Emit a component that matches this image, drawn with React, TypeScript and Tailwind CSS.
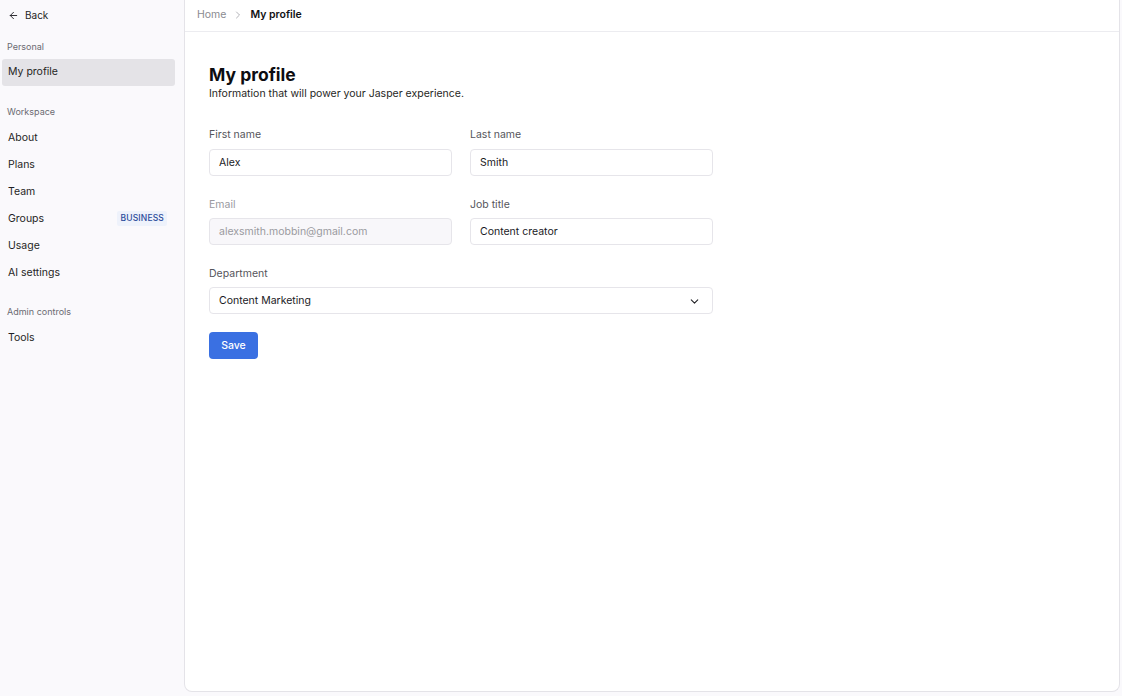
import React from 'react';
import { ArrowLeft, ChevronDown, ChevronRight } from 'lucide-react';

const workspaceItems = ['About', 'Plans', 'Team', 'Groups', 'Usage', 'AI settings'];

function NavItem({ label, active = false, badge }: { label: string; active?: boolean; badge?: string }) {
  return (
    <div
      className={`flex h-[27px] items-center justify-between rounded-[3px] pl-[6px] pr-[8px] text-[10.5px] text-[#1f1f24] ${active ? 'bg-[#e4e3e7]' : ''}`}
    >
      <span>{label}</span>
      {badge && (
        <span className="rounded-[2px] bg-[#eef2fb] px-[3px] py-[1px] text-[8.5px] font-medium tracking-[0.02em] text-[#2a4a9a]">
          {badge}
        </span>
      )}
    </div>
  );
}

function Field({ label, value, disabled = false }: { label: string; value: string; disabled?: boolean }) {
  return (
    <div className="flex flex-col">
      <label className={`mb-[6px] text-[10.5px] ${disabled ? 'text-[#9a9a9f]' : 'text-[#55555b]'}`}>{label}</label>
      <div
        className={`flex h-[27px] items-center rounded-[4px] border border-[#e6e5ea] px-[9px] pt-[1px] text-[10.5px] ${disabled ? 'bg-[#f8f7fa] text-[#9a9a9f]' : 'bg-white text-[#1a1a1e]'}`}
      >
        {value}
      </div>
    </div>
  );
}

export default function App() {
  return (
    <div className="flex h-[696px] w-[1122px] bg-[#faf9fc] font-['Inter',sans-serif]">
      <aside className="flex w-[184px] shrink-0 flex-col px-[2px] pt-[8px]">
        <div className="flex h-[15px] items-center gap-[6px] pl-[6px] text-[10px] text-[#1f1f24]">
          <ArrowLeft className="h-[11px] w-[11px]" strokeWidth={2} />
          <span>Back</span>
        </div>
        <div className="mt-[17px] pl-[5px] text-[9px] text-[#6b6b72]">Personal</div>
        <div className="mt-[5px] w-[173px]">
          <NavItem label="My profile" active />
        </div>
        <div className="mt-[19px] pl-[5px] text-[9px] text-[#6b6b72]">Workspace</div>
        <div className="mt-[6px] flex w-[173px] flex-col">
          {workspaceItems.map((item) => (
            <NavItem key={item} label={item} badge={item === 'Groups' ? 'BUSINESS' : undefined} />
          ))}
        </div>
        <div className="mt-[19px] pl-[5px] text-[9px] text-[#6b6b72]">Admin controls</div>
        <div className="mt-[6px] w-[173px]">
          <NavItem label="Tools" />
        </div>
      </aside>

      <main className="mb-[4px] mr-[2px] flex flex-1 flex-col rounded-b-[8px] border-x border-b border-[#e4e3e8] bg-white">
        <header className="flex h-[32px] shrink-0 items-center gap-[6px] border-b border-[#ececf0] pb-[2px] pl-[12px] text-[10.5px]">
          <span className="text-[#8a8a90]">Home</span>
          <ChevronRight className="h-[12px] w-[12px] text-[#9a9aa0]" strokeWidth={1.5} />
          <span className="font-semibold text-[#111114]">My profile</span>
        </header>

        <div className="flex flex-col pl-[24px] pt-[32px]">
          <h1 className="text-[17.5px] font-bold leading-[22px] text-[#0d0d10]">My profile</h1>
          <p className="text-[10.5px] text-[#1f1f24]">Information that will power your Jasper experience.</p>

          <div className="mt-[25px] grid w-[504px] grid-cols-2 gap-x-[18px] gap-y-[21px]">
            <Field label="First name" value="Alex" />
            <Field label="Last name" value="Smith" />
            <Field label="Email" value="alexsmith.mobbin@gmail.com" disabled />
            <Field label="Job title" value="Content creator" />
            <div className="col-span-2 flex flex-col">
              <label className="mb-[5px] text-[10.5px] text-[#55555b]">Department</label>
              <div className="flex h-[27px] items-center justify-between rounded-[4px] border border-[#e6e5ea] bg-white pl-[9px] pr-[11px] pt-[1px] text-[10.5px] text-[#1a1a1e]">
                <span>Content Marketing</span>
                <ChevronDown className="h-[13px] w-[13px] text-[#222226]" strokeWidth={2} />
              </div>
            </div>
          </div>

          <button className="mt-[18px] flex h-[27px] w-[49px] items-center justify-center rounded-[4px] bg-[#3a70e2] text-[10.5px] font-medium text-white">
            Save
          </button>
        </div>
      </main>
    </div>
  );
}
